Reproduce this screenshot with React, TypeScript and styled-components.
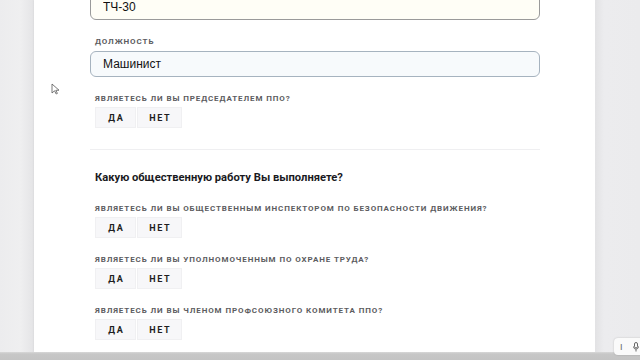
import styled, { createGlobalStyle } from 'styled-components'

const GlobalStyle = createGlobalStyle`
  html, body {
    margin: 0;
    padding: 0;
    background: #ebebed;
    overflow: hidden;
  }
`

const Screen = styled.div`
  position: relative;
  width: 640px;
  height: 360px;
  display: grid;
  grid-template-rows: 1fr 8px;
  overflow: hidden;
`

const Main = styled.div`
  display: flex;
  min-height: 0;
`

const Gutter = styled.div<{ $w?: number; $side: 'left' | 'right' }>`
  flex: ${(p) => (p.$w ? `0 0 ${p.$w}px` : '1')};
  background: ${(p) =>
    p.$side === 'left'
      ? 'linear-gradient(90deg, #ececee 0%, #efeff0 60%, #e4e4e6 100%)'
      : 'linear-gradient(90deg, #e2e2e4 0%, #ececee 20%, #ebebed 100%)'};
`

const Card = styled.div`
  flex: 0 0 561px;
  background: #fff;
  padding: 0 55px 0 61px;
  box-sizing: border-box;
  overflow: hidden;
  box-shadow: 0 0 2px rgba(0, 0, 0, 0.08);
`

const Form = styled.div`
  display: flex;
  flex-direction: column;
  margin-top: -6px;
  font-family: Roboto, 'Noto Sans', sans-serif;
`

const Label = styled.div<{ $mt: number }>`
  margin-top: ${(p) => p.$mt}px;
  font-size: 8px;
  line-height: 10px;
  font-weight: 700;
  letter-spacing: 0.9px;
  text-transform: uppercase;
  color: #5c5c60;
`

const Input = styled.input<{ $tone: 'warm' | 'cool'; $first?: boolean }>`
  margin: ${(p) => (p.$first ? 0 : 4)}px 0 0 -5px;
  width: calc(100% + 5px);
  height: 26px;
  box-sizing: border-box;
  padding: 0 12px;
  border-radius: 6px;
  border: 1px solid ${(p) => (p.$tone === 'warm' ? '#9a9a9a' : '#a6b3bf')};
  background: ${(p) => (p.$tone === 'warm' ? '#fffef6' : '#f7fafc')};
  font-family: 'Liberation Sans', Arial, sans-serif;
  font-size: 12px;
  color: #111;
  outline: none;
`

const Toggle = styled.div`
  display: flex;
  margin-top: 3px;
`

const ToggleButton = styled.button<{ $w: number }>`
  width: ${(p) => p.$w}px;
  height: 21px;
  padding: 0;
  margin-right: 1px;
  border: 1px solid #f0f0f2;
  background: #f7f7f9;
  font-family: Roboto, 'Noto Sans', sans-serif;
  font-size: 9px;
  font-weight: 700;
  letter-spacing: 1.6px;
  color: #1e1e22;
  text-indent: 1.6px;
`

const Divider = styled.hr`
  margin: 21px 0 0 -5px;
  width: calc(100% + 5px);
  border: 0;
  height: 1px;
  background: #efeff1;
`

const Heading = styled.h3`
  margin: 21px 0 0;
  font-size: 11.2px;
  line-height: 14px;
  font-weight: 700;
  color: #1a1a1e;
`

const BottomBar = styled.div`
  background: linear-gradient(180deg, #d8d8d8 0px, #c7c7c7 2px, #c4c4c4 100%);
`

const Pointer = styled.svg`
  position: absolute;
  left: 51px;
  top: 83px;
`

const MicWidget = styled.div`
  position: absolute;
  left: 614px;
  top: 338px;
  width: 34px;
  height: 17px;
  background: #fafafa;
  border-radius: 4px;
  box-shadow: 0 0 2px rgba(0, 0, 0, 0.2);
  display: flex;
  align-items: center;
  gap: 10px;
  padding-left: 6px;
  box-sizing: border-box;
  color: #666;
  font-family: 'Liberation Sans', sans-serif;
  font-size: 9px;
`

const questions = [
  'Являетесь ли вы общественным инспектором по безопасности движения?',
  'Являетесь ли вы уполномоченным по охране труда?',
  'Являетесь ли вы членом профсоюзного комитета ППО?',
]

function YesNo() {
  return (
    <Toggle>
      <ToggleButton $w={41}>ДА</ToggleButton>
      <ToggleButton $w={45}>НЕТ</ToggleButton>
    </Toggle>
  )
}

export default function App() {
  return (
    <>
      <GlobalStyle />
      <Screen>
        <Main>
          <Gutter $side="left" $w={34} />
          <Card>
            <Form>
              <Input $tone="warm" $first defaultValue="ТЧ-30" />
              <Label $mt={17}>Должность</Label>
              <Input $tone="cool" defaultValue="Машинист" />
              <Label $mt={17}>Являетесь ли вы председателем ППО?</Label>
              <YesNo />
              <Divider />
              <Heading>Какую общественную работу Вы выполняете?</Heading>
              {questions.map((q, i) => (
                <div key={q}>
                  <Label $mt={i === 0 ? 19 : 17}>{q}</Label>
                  <YesNo />
                </div>
              ))}
            </Form>
          </Card>
          <Gutter $side="right" />
        </Main>
        <BottomBar />
        <Pointer width="9" height="12" viewBox="0 0 9 12">
          <path d="M1 1 L1 10 L3.5 7.8 L5.2 11 L6.4 10.4 L4.8 7.3 L8 7.2 Z" fill="#fff" stroke="#555" strokeWidth="0.8" />
        </Pointer>
        <MicWidget>
          <span>I</span>
          <svg width="6" height="10" viewBox="0 0 6 10">
            <rect x="1.5" y="0.5" width="3" height="5.5" rx="1.5" fill="none" stroke="#666" strokeWidth="1" />
            <path d="M0.5 4.5 C0.5 8 5.5 8 5.5 4.5 M3 7.5 V9.5" fill="none" stroke="#666" strokeWidth="1" />
          </svg>
        </MicWidget>
      </Screen>
    </>
  )
}
